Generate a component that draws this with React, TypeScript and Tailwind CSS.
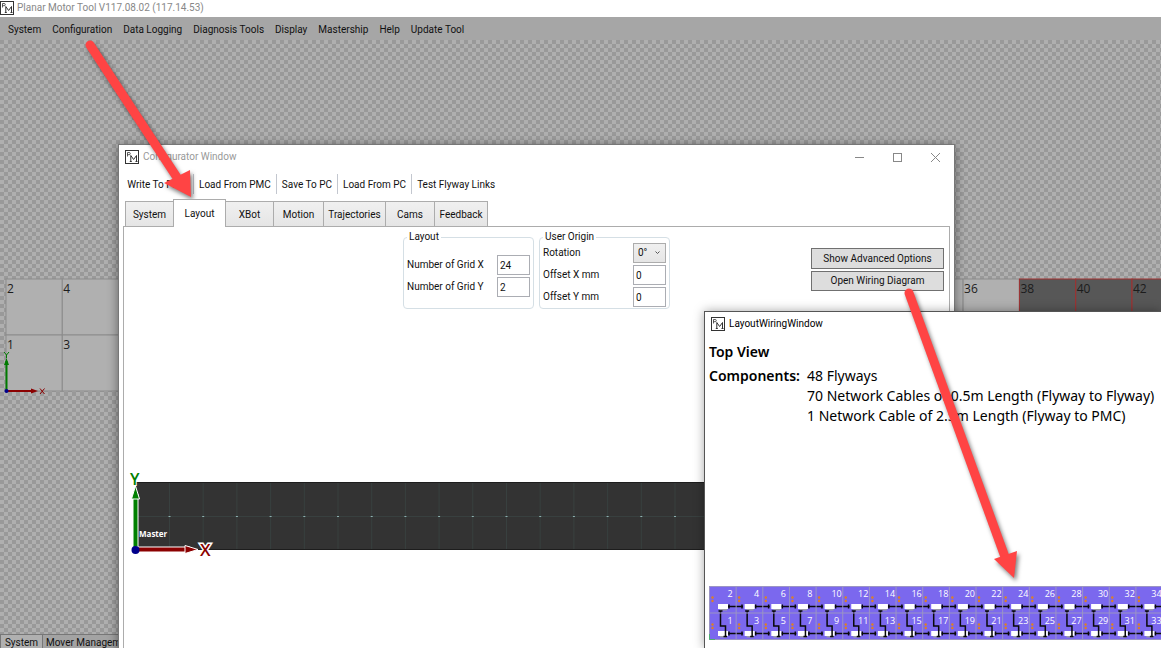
import React from "react";

const menuItems = ["System", "Configuration", "Data Logging", "Diagnosis Tools", "Display", "Mastership", "Help", "Update Tool"];
const commands = ["Write To PMC", "Load From PMC", "Save To PC", "Load From PC", "Test Flyway Links"];
const tabs = [
  { name: "System", width: "w-[49px]" },
  { name: "Layout", width: "w-[53px]" },
  { name: "XBot", width: "w-[49px]" },
  { name: "Motion", width: "w-[51px]" },
  { name: "Trajectories", width: "w-[63px]" },
  { name: "Cams", width: "w-[50px]" },
  { name: "Feedback", width: "w-[54px]" },
];
const range = (n: number) => Array.from({ length: n }, (_, i) => i);

function Logo() {
  return (
    <svg width="14" height="14" viewBox="0 0 14 14" fill="none" stroke="#333" className="shrink-0" aria-hidden="true">
      <rect x="0.5" y="0.5" width="13" height="13" fill="#fff" />
      <path d="M2.5 6.500V2.500H4.200Q5.300 2.500 5.300 3.600T4.200 4.700H2.500" strokeWidth="0.8" />
      <path d="M5.800 11V5.500L8.600 9.500L11.500 5.500V11M4.800 11.500H6.800M10.500 11.500H12.500" strokeWidth="1" />
    </svg>
  );
}

function FlywayCanvas() {
  const pitch = 56.3;
  const labelled = (col: number, row: number) => col < 2 || (col > 16 && row === 0);
  return (
    <svg className="h-full w-full font-['Open_Sans',sans-serif]" aria-label="Flyway field" fontSize="12" fill="#1c1c1c">
      <defs>
        <pattern id="checker" width="8" height="8" patternUnits="userSpaceOnUse">
          <rect width="8" height="8" fill="#afafaf" />
          <path d="M0 0H4V4H0ZM4 4H8V8H4Z" fill="#999" />
        </pattern>
      </defs>
      <rect width="100%" height="100%" fill="url(#checker)" />
      {range(21).map((col) =>
        [0, 1].map((row) => {
          const x = 6 + col * pitch;
          const y = 239 + row * 56;
          const dark = col >= 18;
          return (
            <g key={`${col}-${row}`}>
              <rect x={x} y={y} width={pitch} height="56" fill={dark ? "#575757" : "#b0b0b0"} stroke={dark ? "#a03030" : "#8c8c8c"} />
              {labelled(col, row) && <text x={x + 1} y={y + 14}>{col * 2 + 2 - row}</text>}
            </g>
          );
        }),
      )}
      <path d="M6.500 351V321" stroke="#007a00" strokeWidth="2" />
      <path d="M6.500 318L9 325H4Z" fill="#007a00" />
      <path d="M6 351H33" stroke="#8b0000" strokeWidth="2" />
      <path d="M38 351L31 348.500V353.500Z" fill="#8b0000" />
      <circle cx="6.500" cy="351" r="2" fill="#00008b" />
      <path d="M4 312L6.500 315L9 312M6.500 315V318" fill="none" stroke="#007a00" />
      <path d="M40 348.500L44.500 354M44.500 348.500L40 354" stroke="#8b0000" />
    </svg>
  );
}

function TrackPreview() {
  return (
    <svg className="h-[90px] w-full overflow-visible font-['Open_Sans',sans-serif]" aria-label="Track preview">
      <rect x="12" y="12" width="808" height="68" fill="#333" />
      <path d="M12 46.500H820" stroke="#38403f" />
      {range(24).map((i) => (
        <path key={i} d={`M${45.5 + i * 33.7} 12V80`} stroke="#38403f" />
      ))}
      {range(24).map((i) => (
        <rect key={i} x={44.5 + i * 33.7} y="46" width="2" height="1" fill="#8fb0b0" />
      ))}
      <path d="M12 12.500H820M12 79.500H820" stroke="#1d1d1d" />
      <path d="M11.500 80V24" stroke="#fff" strokeWidth="6" />
      <path d="M11.500 80V24" stroke="#008000" strokeWidth="4" />
      <path d="M11.500 16L15.500 29H7.500Z" fill="#008000" stroke="#fff" />
      <path d="M11 79.500H66" stroke="#fff" strokeWidth="6" />
      <path d="M11 79.500H66" stroke="#8b0000" strokeWidth="4" />
      <path d="M74 79.500L61 75.500V83.500Z" fill="#8b0000" stroke="#fff" />
      <circle cx="11.500" cy="80" r="4" fill="#00008b" />
      <text x="6" y="15" fontSize="16" fontWeight="600" fill="#008000" stroke="#fff" strokeWidth="2" paintOrder="stroke">Y</text>
      <text x="76" y="86" fontSize="17" fontWeight="600" fill="#8b0000" stroke="#fff" strokeWidth="3" paintOrder="stroke">X</text>
      <text x="15" y="67" fontSize="8" fontWeight="700" fill="#fff">Master</text>
    </svg>
  );
}

function WiringDiagram() {
  const pitch = 26.65;
  return (
    <svg className="h-[55px] w-full font-['Open_Sans',sans-serif]" aria-label="Wiring diagram" fontSize="9" fill="#fff">
      <rect width="100%" height="54" fill="#7b68ee" />
      {range(17).map((col) => {
        const x = col * pitch;
        return (
          <g key={col}>
            <path d={`M${x + 0.5} 0V54`} stroke="#9b94c4" />
            {[0, 1].map((row) => {
              const y = row * 27;
              return (
                <g key={row}>
                  <path d={`M${x + 19} ${y + 20.5}H${x + 34}`} stroke="#090909" strokeWidth="1.500" />
                  <path d={`M${x + 20} ${y + 18.5}V${y + 22.5}M${x + 33} ${y + 18.5}V${y + 22.5}`} stroke="#090909" strokeWidth="1.500" />
                  <rect x={x + 9} y={y + 18} width="10" height="5" fill="#fff" />
                  <rect x={x + 11} y={y + 23} width="7" height="1.500" fill="#9b9ba8" />
                  <circle cx={x + 3.5} cy={y + 11.5} r="1.200" fill="#e08020" />
                  <circle cx={x + 3.5} cy={y + 15} r="1.200" fill="#e08020" />
                  <text x={x + 21} y={y + 11} textAnchor="middle">{col * 2 + 2 - row}</text>
                </g>
              );
            })}
            <path d={`M${x + 11.5} 25V40H${x + 16.5}V50M${x + 9.5} 25H${x + 13.5}M${x + 14.5} 50.500H${x + 18}`} fill="none" stroke="#090909" strokeWidth="1.500" />
          </g>
        );
      })}
      <path d="M0 27H460M0 0.500H460M0 53.500H460" stroke="#9b94c4" />
      <path d="M0.500 48V53.500H6" fill="none" stroke="#4caf70" />
    </svg>
  );
}

function Field({ id, label, value }: { id: string; label: string; value: string }) {
  return (
    <div className="flex items-center justify-between">
      <label htmlFor={id}>{label}</label>
      <input id={id} defaultValue={value} className="h-5 w-[33px] border border-[#abadb3] bg-white px-0.5 outline-none" />
    </div>
  );
}

function ConfiguratorWindow() {
  return (
    <section className="absolute top-[144px] left-[118px] flex h-[560px] w-[837px] flex-col border border-[#777] bg-white px-1 shadow-[0_2px_10px_rgba(0,0,0,0.45)]">
      <header className="flex h-6 items-center gap-1 pl-0.5 text-[#999]">
        <Logo />
        <h2 className="grow">Configurator Window</h2>
        <div className="flex gap-6 pr-2">
          <button aria-label="Minimize" className="flex size-[14px] items-center justify-center"><svg width="9" height="9" stroke="#888"><path d="M0 4.500H9" /></svg></button>
          <button aria-label="Maximize" className="flex size-[14px] items-center justify-center"><svg width="9" height="9" fill="none" stroke="#888"><rect x="0.500" y="0.500" width="8" height="8" /></svg></button>
          <button aria-label="Close" className="flex size-[14px] items-center justify-center"><svg width="9" height="9" stroke="#888"><path d="M0 0L9 9M9 0L0 9" /></svg></button>
        </div>
      </header>
      <div className="mt-[5px] flex h-5 divide-x divide-[#c3c7cf]">
        {commands.map((c) => (
          <button key={c} className="px-[5px] pt-0.5 whitespace-nowrap first:w-[71px] first:pl-1">{c}</button>
        ))}
      </div>
      <div role="tablist" className="mt-[5px] flex items-end pl-0.5">
        {tabs.map((t) => (
          <button
            key={t.name}
            role="tab"
            aria-selected={t.name === "Layout"}
            className={`${t.width} relative -mr-px shrink-0 border border-b-0 border-[#acacac] text-center ${
              t.name === "Layout" ? "z-10 -mb-px h-[28px] bg-white" : "h-[25px] bg-linear-to-b from-[#f0f0f0] to-[#e5e5e5] pt-0.5"
            }`}
          >
            {t.name}
          </button>
        ))}
      </div>
      <div className="flex grow flex-col border border-[#acacac]">
        <div className="flex h-[243px] items-start">
          <div className="ml-[279px] flex gap-[5px] pt-1">
            <fieldset className="h-[78px] w-[131px] rounded-sm border border-[#d5dfe5] px-[3px]">
              <legend className="px-0.5 leading-3">Layout</legend>
              <div className="flex flex-col gap-0.5 pt-3">
                <Field id="grid-x" label="Number of Grid X" value="24" />
                <Field id="grid-y" label="Number of Grid Y" value="2" />
              </div>
            </fieldset>
            <fieldset className="h-[78px] w-[131px] rounded-sm border border-[#d5dfe5] px-[3px]">
              <legend className="px-0.5 leading-3">User Origin</legend>
              <div className="flex flex-col gap-0.5">
                <div className="flex items-center justify-between">
                  <label htmlFor="rotation">Rotation</label>
                  <div className="relative">
                    <select id="rotation" className="block h-5 w-[33px] appearance-none border border-[#acacac] bg-linear-to-b from-[#f0f0f0] to-[#e5e5e5] pl-1 outline-none">
                      <option>0°</option>
                    </select>
                    <svg width="5" height="3" fill="none" stroke="#555" className="pointer-events-none absolute top-2 right-1.5"><path d="M0.500 0.500L2.500 2.500L4.500 0.500" /></svg>
                  </div>
                </div>
                <Field id="offset-x" label="Offset X mm" value="0" />
                <Field id="offset-y" label="Offset Y mm" value="0" />
              </div>
            </fieldset>
          </div>
          <div className="mt-[21px] mr-[5px] ml-auto flex w-[133px] flex-col gap-0.5">
            <button className="h-[21px] border border-[#707070] bg-[#ddd]">Show Advanced Options</button>
            <button className="h-5 border border-[#707070] bg-[#ddd]">Open Wiring Diagram</button>
          </div>
        </div>
        <TrackPreview />
      </div>
    </section>
  );
}

function WiringWindow() {
  return (
    <section className="absolute top-[311px] right-0 bottom-0 left-[704px] flex flex-col border-t border-l border-[#555] bg-white pl-1 whitespace-nowrap text-black shadow-[0_0_10px_rgba(0,0,0,0.35)]">
      <header className="flex h-6 items-center gap-1 pl-0.5">
        <Logo />
        <h2>LayoutWiringWindow</h2>
      </header>
      <div className="h-[250px] pt-1.5 font-['Noto_Sans',sans-serif] text-[14px] leading-5">
        <h3 className="mb-1 font-semibold">Top View</h3>
        <div className="flex">
          <h3 className="w-[98px] font-semibold">Components:</h3>
          <ul>
            <li>48 Flyways</li>
            <li>70 Network Cables of 0.5m Length (Flyway to Flyway)</li>
            <li>1 Network Cable of 2.5m Length (Flyway to PMC)</li>
          </ul>
        </div>
      </div>
      <WiringDiagram />
    </section>
  );
}

function Arrows() {
  return (
    <svg className="pointer-events-none absolute inset-0 h-full w-full drop-shadow-[2px_3px_2px_rgba(0,0,0,0.5)]" fill="#ff4444" stroke="#ff4444" aria-hidden="true">
      <path d="M90 45L178 179" strokeWidth="9" strokeLinecap="round" />
      <path d="M191 197L164 183L190 170Z" stroke="none" />
      <path d="M909 293L1005 557" strokeWidth="9" strokeLinecap="round" />
      <path d="M1014 578L994 559L1017 551Z" stroke="none" />
    </svg>
  );
}

export default function App() {
  return (
    <main className="relative flex h-screen flex-col overflow-hidden bg-[#aaa] font-[Roboto,'Open_Sans',sans-serif] text-[10px] leading-[14px] text-[#111]">
      <header className="flex h-[17px] shrink-0 items-center gap-[3px] bg-white pb-0.5 text-[#888]">
        <Logo />
        <h1>Planar Motor Tool V117.08.02 (117.14.53)</h1>
      </header>
      <nav className="flex h-[23px] shrink-0 items-center gap-[11px] bg-[#a6a6a6] px-2 pt-0.5">
        {menuItems.map((m) => (
          <button key={m} className="whitespace-nowrap">{m}</button>
        ))}
      </nav>
      <div className="min-h-0 grow"><FlywayCanvas /></div>
      <div role="tablist" className="flex h-[14px] shrink-0 items-stretch bg-[#aaa] leading-[11px]">
        <button role="tab" aria-selected="true" className="w-[43px] border border-b-0 border-[#777] bg-[#b0b0b0] pt-0.5">System</button>
        <button role="tab" aria-selected="false" className="border-t border-[#777] bg-[#a3a3a3] px-[3px] pt-0.5">Mover Management</button>
      </div>
      <ConfiguratorWindow />
      <WiringWindow />
      <Arrows />
    </main>
  );
}
